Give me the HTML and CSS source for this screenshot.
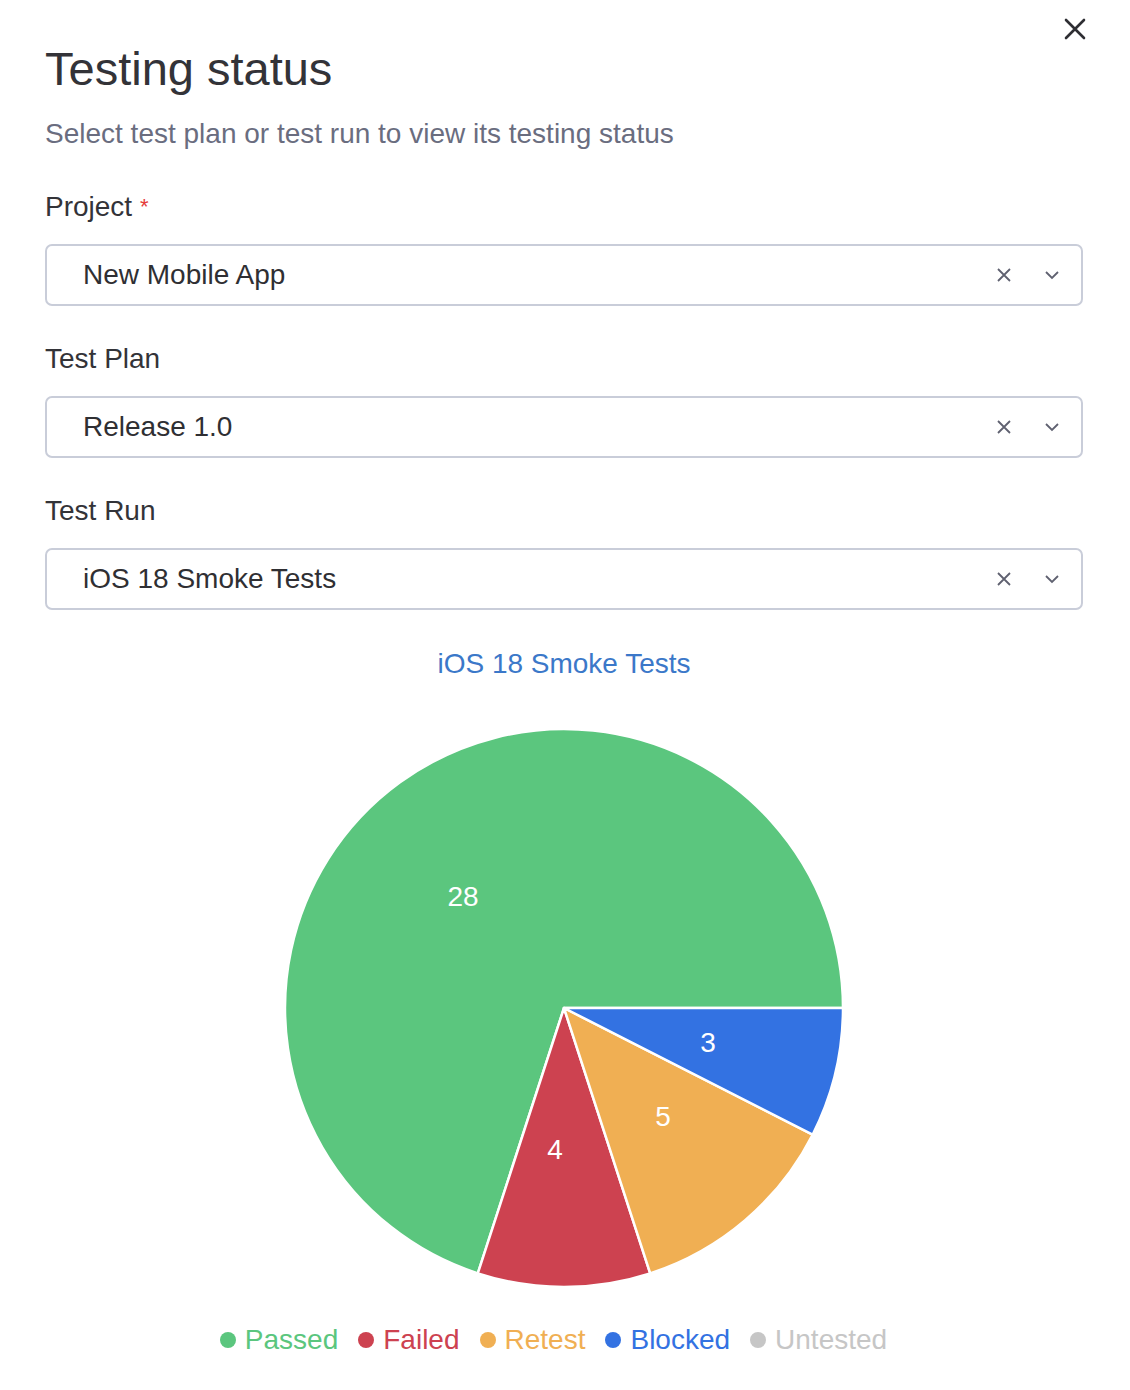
FILE: index.html
```html
<!DOCTYPE html>
<html lang="en">
<head>
  <meta charset="UTF-8" />
  <title>Testing status</title>
  <link rel="stylesheet" href="styles.css">
</head>
<body>
  <div class="modal">
    <button class="close" aria-label="Close">
      <svg width="22" height="22" viewBox="0 0 22 22"><path d="M2 2 L20 20 M20 2 L2 20" stroke="#2e2e33" stroke-width="2.6" stroke-linecap="round"/></svg>
    </button>

    <h1>Testing status</h1>
    <p class="subtitle">Select test plan or test run to view its testing status</p>

    <div class="field">
      <label>Project <span class="req">*</span></label>
      <div class="select">
        <span class="value">New Mobile App</span>
        <span class="icons">
          <svg width="16" height="16" viewBox="0 0 16 16"><path d="M2 2 L14 14 M14 2 L2 14" stroke="#5f6170" stroke-width="1.8"/></svg>
          <svg width="16" height="10" viewBox="0 0 16 10"><path d="M2 2 L8 8 L14 2" fill="none" stroke="#5f6170" stroke-width="1.8"/></svg>
        </span>
      </div>
    </div>

    <div class="field">
      <label>Test Plan</label>
      <div class="select">
        <span class="value">Release 1.0</span>
        <span class="icons">
          <svg width="16" height="16" viewBox="0 0 16 16"><path d="M2 2 L14 14 M14 2 L2 14" stroke="#5f6170" stroke-width="1.8"/></svg>
          <svg width="16" height="10" viewBox="0 0 16 10"><path d="M2 2 L8 8 L14 2" fill="none" stroke="#5f6170" stroke-width="1.8"/></svg>
        </span>
      </div>
    </div>

    <div class="field">
      <label>Test Run</label>
      <div class="select">
        <span class="value">iOS 18 Smoke Tests</span>
        <span class="icons">
          <svg width="16" height="16" viewBox="0 0 16 16"><path d="M2 2 L14 14 M14 2 L2 14" stroke="#5f6170" stroke-width="1.8"/></svg>
          <svg width="16" height="10" viewBox="0 0 16 10"><path d="M2 2 L8 8 L14 2" fill="none" stroke="#5f6170" stroke-width="1.8"/></svg>
        </span>
      </div>
    </div>

    <div class="chart">
      <div class="chart-title">iOS 18 Smoke Tests</div>
      <svg class="pie" width="560" height="560" viewBox="0 0 560 560">
        <g stroke="#fff" stroke-width="2.5" stroke-linejoin="round">
          <path d="M280 280 L193.8 545.4 A279 279 0 1 1 559 280 Z" fill="#5bc67e"/>
          <path d="M280 280 L366.2 545.4 A279 279 0 0 1 193.8 545.4 Z" fill="#cd4250"/>
          <path d="M280 280 L528.6 406.7 A279 279 0 0 1 366.2 545.4 Z" fill="#f0af53"/>
          <path d="M280 280 L559 280 A279 279 0 0 1 528.6 406.7 Z" fill="#3372e2"/>
        </g>
        <g class="pie-labels" fill="#fff" text-anchor="middle">
          <text x="179" y="178">28</text>
          <text x="271" y="431">4</text>
          <text x="379" y="398">5</text>
          <text x="424" y="324">3</text>
        </g>
      </svg>
      <div class="legend">
        <span class="item passed"><i></i>Passed</span>
        <span class="item failed"><i></i>Failed</span>
        <span class="item retest"><i></i>Retest</span>
        <span class="item blocked"><i></i>Blocked</span>
        <span class="item untested"><i></i>Untested</span>
      </div>
    </div>
  </div>
</body>
</html>
```

FILE: styles.css
```css
body { margin: 0; background: #fff; font-family: "Liberation Sans", Arial, sans-serif; color: #333338; }
.modal { position: relative; padding: 42px 47px 30px 45px; }
.close { position: absolute; top: 18px; right: 44px; background: none; border: 0; padding: 0; cursor: pointer; }
h1 { margin: 0; font-size: 47px; line-height: 54px; font-weight: normal; color: #333338; }
.subtitle { margin: 21px 0 0; font-size: 28px; line-height: 34px; color: #6a6d7f; }
.field { margin-top: 39px; }
.field + .field { margin-top: 36px; }
label { display: block; font-size: 28px; line-height: 34px; color: #333338; }
.req { color: #e53b3b; font-size: 22px; vertical-align: top; }
.select { margin-top: 20px; height: 62px; box-sizing: border-box; border: 2px solid #c9cdd9; border-radius: 7px; display: flex; align-items: center; justify-content: space-between; padding: 0 21px 0 36px; }
.value { font-size: 28px; line-height: 34px; color: #2f2f33; }
.icons { display: flex; align-items: center; gap: 32px; }
.icons svg { display: block; }
.chart { margin-top: 37px; display: flex; flex-direction: column; align-items: center; }
.chart-title { font-size: 28px; line-height: 34px; color: #3b78c9; }
.pie { display: block; margin-top: 47px; }
.pie-labels { font-family: "Liberation Sans", Arial, sans-serif; font-size: 28px; }
.legend { margin-top: 35px; display: flex; gap: 20px; padding-right: 21px; font-size: 28px; line-height: 34px; }
.item { display: flex; align-items: center; }
.item i { width: 16px; height: 16px; border-radius: 50%; margin-right: 9px; }
.passed { color: #5bc67e; } .passed i { background: #5bc67e; }
.failed { color: #cd4250; } .failed i { background: #cd4250; }
.retest { color: #f0af53; } .retest i { background: #f0af53; }
.blocked { color: #3372e2; } .blocked i { background: #3372e2; }
.untested { color: #c6c6c6; } .untested i { background: #c6c6c6; }
```
